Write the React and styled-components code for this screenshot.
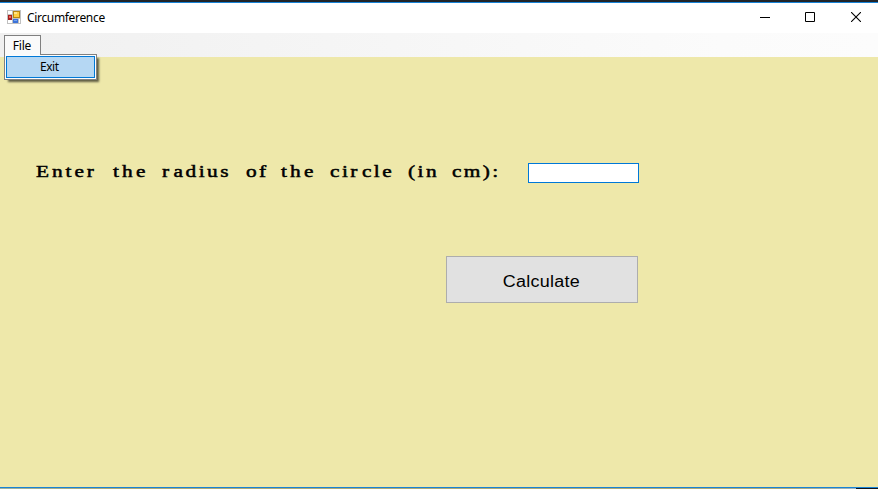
import React from "react";
import styled, { createGlobalStyle } from "styled-components";

const GlobalStyle = createGlobalStyle`
  *, *::before, *::after { box-sizing: border-box; }
  body { margin: 0; overflow: hidden; }
`;

const Window = styled.div`
  display: flex;
  flex-direction: column;
  width: 878px;
  height: 489px;
  background: #eee8aa;
  color: #000;
  font: 12px/16px "Noto Sans", "Open Sans", sans-serif;
`;

const TopEdge = styled.div`
  flex: none;
  height: 3px;
  background: #1883d7;
  border-top: 2px solid #212429;
`;

const TitleBar = styled.header`
  flex: none;
  display: flex;
  align-items: center;
  height: 30px;
  padding: 0 1px 0 7px;
  background: #fff;
`;

const FormIcon = styled.svg`
  display: block;
  width: 14px;
  height: 14px;
  margin-top: -2px;
`;

const Title = styled.h1`
  margin: -1px auto 0 6px;
  font: inherit;
  letter-spacing: -0.33px;
`;

const WindowButton = styled.button`
  width: ${(p) => p.$width || 46}px;
  height: 30px;
  padding: 0;
  border: 0;
  background: none;
  svg { display: block; margin: 9px auto 11px 20px; }
`;

const MenuBar = styled.nav`
  flex: none;
  height: 24px;
  padding: 2px 0 0 4px;
  background: linear-gradient(90deg, #f0f0f0, #fbfbfb 82%, #fcfcfc);
`;

const MenuRoot = styled.div`
  position: relative;
  width: 37px;
`;

const MenuTab = styled.button`
  display: block;
  position: relative;
  z-index: 2;
  width: 37px;
  height: 20px;
  padding: 0 1px 0 0;
  border: 1px solid #808080;
  border-bottom: 0;
  background: #fafafa;
  color: #000;
  font: inherit;
  letter-spacing: -0.2px;
`;

const Dropdown = styled.div`
  position: absolute;
  top: 19px;
  left: 0;
  width: 93px;
  height: 26px;
  padding: 1px;
  border: 1px solid #808080;
  background: #fdfdfd;
  box-shadow: 3px 3px 2px -1px rgba(0, 0, 0, 0.6);
`;

const MenuItem = styled.button`
  display: block;
  width: 89px;
  height: 22px;
  padding: 0 0 1px 33px;
  border: 1px solid #0078d7;
  background: #b5d7f3;
  color: #000;
  font: inherit;
  text-align: left;
  letter-spacing: -0.45px;
`;

const Form = styled.main`
  flex: 1;
  display: flex;
  flex-direction: column;
  padding: 106px 0 0 36px;
`;

const Field = styled.label`
  display: flex;
  height: 20px;
`;

const Prompt = styled.span`
  display: grid;
  grid-template-columns: 77px 49px 84px 35px 49px 78px 44px 76px;
  width: 492px;
  font: 17.5px/16px "Liberation Serif", serif;
  -webkit-text-stroke: 0.5px #000;
  white-space: nowrap;
`;

const Word = styled.span`
  letter-spacing: ${(p) => p.$spacing}px;
  transform: scaleX(1.22);
  transform-origin: 0 50%;
`;

const WideGap = styled.span`
  margin-right: 1.7px;
`;

const RadiusInput = styled.input`
  width: 111px;
  height: 20px;
  padding: 1px 3px;
  border: 1px solid #0078d7;
  border-radius: 0;
  outline: 0;
  background: #fff;
`;

const CalculateButton = styled.button`
  width: 192px;
  height: 47px;
  margin: 73px 0 0 410px;
  padding: 4px 0 0;
  border: 1px solid #adadad;
  background: #e1e1e1;
  color: #000;
  font: 16px/20px "Liberation Sans", Arial, sans-serif;
`;

const ButtonText = styled.span`
  display: inline-block;
  letter-spacing: 0.25px;
  transform: translateX(-1px) scaleX(1.12);
`;

const BottomEdge = styled.footer`
  flex: none;
  height: 2px;
  background:
    linear-gradient(#1883d7, #1883d7) 0 0 / 100% 1px no-repeat,
    linear-gradient(90deg, #9bb2a0 0, #aba976 12%, #aba976 90%, #98b3c5 856px, #111418 856px) 0 1px / 100% 1px no-repeat;
`;

export default function App() {
  return (
    <Window>
      <GlobalStyle />
      <TopEdge />
      <TitleBar>
        <FormIcon viewBox="0 0 14 14" shapeRendering="crispEdges" aria-hidden="true">
          <path fill="#c0c0c0" d="M0 0h14v14H0z" />
          <path fill="#fff" d="M1 1h4v3H1zM1 10h4v3H1zM12 9h1v4h-1z" />
          <path fill="#a82020" d="M1 5h4v5H1z" />
          <path fill="#ec6a5b" d="M2 6h2v2H2z" />
          <path fill="#b98512" d="M6 1h7v7H6z" />
          <path fill="#ffce42" d="M7 2h5v5H7z" />
          <path fill="#ffe58c" d="M7 2h3v2H7z" />
          <path fill="#3c72d8" d="M6 9h5v4H6z" />
          <path fill="#75a5f4" d="M7 10h3v1H7z" />
        </FormIcon>
        <Title>Circumference</Title>
        <WindowButton aria-label="Minimize" $width={45}>
          <svg width="10" height="10" shapeRendering="crispEdges"><path d="M0 5h10v1H0z" /></svg>
        </WindowButton>
        <WindowButton aria-label="Maximize">
          <svg width="10" height="10"><path d="M.5.5h9v9h-9z" fill="none" stroke="#000" /></svg>
        </WindowButton>
        <WindowButton aria-label="Close">
          <svg width="10" height="10"><path d="m0 0 10 10M10 0 0 10" fill="none" stroke="#000" strokeWidth="1.1" /></svg>
        </WindowButton>
      </TitleBar>
      <MenuBar>
        <MenuRoot>
          <MenuTab>File</MenuTab>
          <Dropdown><MenuItem>Exit</MenuItem></Dropdown>
        </MenuRoot>
      </MenuBar>
      <Form>
        <Field>
          <Prompt>
            <Word $spacing={2.4}>Enter </Word>
            <Word $spacing={2.6}>the </Word>
            <Word $spacing={2}><WideGap>r</WideGap>adius </Word>
            <Word $spacing={2}>of </Word>
            <Word $spacing={2.6}>the </Word>
            <Word $spacing={2}>ci<WideGap>r</WideGap>cle </Word>
            <Word $spacing={2}>(in </Word>
            <Word $spacing={1.9}>cm):</Word>
          </Prompt>
          <RadiusInput />
        </Field>
        <CalculateButton><ButtonText>Calculate</ButtonText></CalculateButton>
      </Form>
      <BottomEdge />
    </Window>
  );
}
